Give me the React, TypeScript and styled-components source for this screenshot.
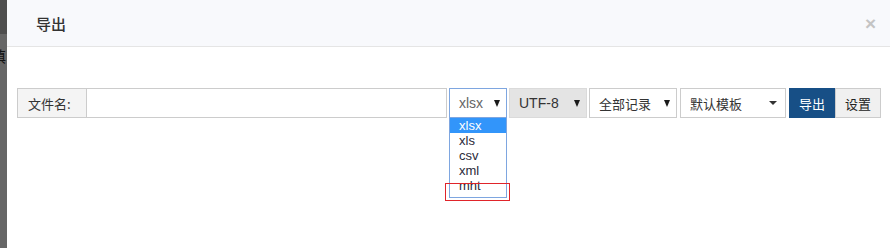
import React from "react";
import styled, { createGlobalStyle } from "styled-components";

const GlobalStyle = createGlobalStyle`
html, body {
  margin: 0;
  padding: 0;
  background: #fff;
}
body {
  font-family: "Liberation Sans", Arial, "Noto Sans CJK SC", sans-serif;
  font-size: 13px;
  color: #333;
}
`;

const Page = styled.div`
display: flex;
width: 890px;
height: 248px;
overflow: hidden;
`;

const Backdrop = styled.div`
width: 7px;
flex-shrink: 0;
display: flex;
flex-direction: column;
overflow: hidden;
background: #666;
`;

const BackdropTop = styled.div`
height: 34px;
background: #4e4e4e;
`;

const BackdropText = styled.div`
margin-top: 13px;
margin-left: -9px;
font-family: "Noto Sans CJK SC", sans-serif;
font-size: 15px;
line-height: 18px;
color: #111;
white-space: nowrap;
`;

const Modal = styled.div`
flex: 1;
display: flex;
flex-direction: column;
background: #fff;
`;

const Header = styled.div`
height: 46px;
display: flex;
align-items: center;
justify-content: space-between;
padding: 0 14px 0 29px;
background: #f8f9fc;
border-bottom: 1px solid #e5e5e5;
`;

const Title = styled.div`
font-family: "Noto Sans CJK SC", sans-serif;
font-size: 15px;
font-weight: 500;
color: #333;
`;

const Close = styled.div`
font-family: "Liberation Sans", Arial, sans-serif;
font-size: 19px;
font-weight: bold;
color: #c4c4c4;
line-height: 1;
margin-top: 1px;
`;

const Body = styled.div`
padding: 41px 0 0 10px;
`;

const Row = styled.div`
display: flex;
align-items: stretch;
height: 30px;
`;

const Label = styled.div`
width: 70px;
box-sizing: border-box;
display: flex;
align-items: center;
padding-left: 10px;
background: #f4f4f4;
border: 1px solid #ccc;
font-family: "Noto Sans CJK SC", sans-serif;
font-size: 13px;
color: #333;
`;

const Input = styled.div`
width: 360px;
box-sizing: border-box;
border: 1px solid #ccc;
border-left: none;
background: #fff;
`;

const SelectWrap = styled.div<{ $gap: number }>`
position: relative;
margin-left: ${(p) => p.$gap}px;
display: flex;
`;

const Select = styled.div<{ $w: number; $disabled?: boolean; $focus?: boolean; $cjk?: boolean }>`
width: ${(p) => p.$w}px;
box-sizing: border-box;
display: flex;
align-items: center;
justify-content: space-between;
padding: 0 5px 0 9px;
background: ${(p) => (p.$disabled ? "#e4e4e4" : "#fff")};
border: 1px solid ${(p) => (p.$focus ? "#7ea6e0" : p.$disabled ? "#dadada" : "#ccc")};
color: ${(p) => (p.$focus ? "#666" : "#333")};
font-family: ${(p) => (p.$cjk ? '"Noto Sans CJK SC", sans-serif' : '"Liberation Sans", Arial, sans-serif')};
font-size: ${(p) => (p.$cjk ? "13px" : "14px")};
`;

const Arrow = styled.span`
width: 0;
height: 0;
margin-right: 1px;
border-left: 3.5px solid transparent;
border-right: 3.5px solid transparent;
border-top: 7px solid #1a1a1a;
`;

const Caret = styled.span`
width: 0;
height: 0;
margin-right: 3px;
border-left: 4px solid transparent;
border-right: 4px solid transparent;
border-top: 4px solid #333;
`;

const Options = styled.ul`
position: absolute;
top: 30px;
left: 0;
width: 58px;
box-sizing: border-box;
margin: 0;
padding: 0 0 4px;
list-style: none;
background: #fff;
border: 1px solid #7ea6e0;
border-top: none;
z-index: 2;
`;

const Option = styled.li<{ $active?: boolean }>`
height: 15px;
line-height: 15px;
padding-left: 9px;
font-size: 13px;
background: ${(p) => (p.$active ? "#3295fa" : "transparent")};
color: ${(p) => (p.$active ? "#fff" : "#2a2a3a")};
`;

const Marker = styled.div`
position: absolute;
top: 95px;
left: -4px;
width: 65px;
height: 18px;
box-sizing: border-box;
border: 1px solid #e0242a;
z-index: 3;
`;

const Button = styled.div<{ $primary?: boolean; $gap: number }>`
width: 46px;
box-sizing: border-box;
margin-left: ${(p) => p.$gap}px;
display: flex;
align-items: center;
justify-content: center;
font-family: "Noto Sans CJK SC", sans-serif;
font-size: 13px;
background: ${(p) => (p.$primary ? "#174f86" : "#f0f0f0")};
color: ${(p) => (p.$primary ? "#fff" : "#222")};
border: 1px solid ${(p) => (p.$primary ? "#174f86" : "#ccc")};
`;

const formats = ["xlsx", "xls", "csv", "xml", "mht"];

export default function App() {
    return (
        <Page>
            <GlobalStyle />
            <Backdrop>
                <BackdropTop />
                <BackdropText>填</BackdropText>
            </Backdrop>
            <Modal>
                <Header>
                    <Title>导出</Title>
                    <Close>×</Close>
                </Header>
                <Body>
                    <Row>
                        <Label>文件名:</Label>
                        <Input />
                        <SelectWrap $gap={2}>
                            <Select $w={58} $focus>
                                xlsx<Arrow />
                            </Select>
                            <Options>
                                {formats.map((f, i) => (
                                    <Option key={f} $active={i === 0}>{f}</Option>
                                ))}
                            </Options>
                            <Marker />
                        </SelectWrap>
                        <SelectWrap $gap={2}>
                            <Select $w={78} $disabled>
                                UTF-8<Arrow />
                            </Select>
                        </SelectWrap>
                        <SelectWrap $gap={2}>
                            <Select $w={88} $cjk>
                                全部记录<Arrow />
                            </Select>
                        </SelectWrap>
                        <SelectWrap $gap={3}>
                            <Select $w={106} $cjk>
                                默认模板<Caret />
                            </Select>
                        </SelectWrap>
                        <Button $primary $gap={3}>导出</Button>
                        <Button $gap={0}>设置</Button>
                    </Row>
                </Body>
            </Modal>
        </Page>
    );
}
